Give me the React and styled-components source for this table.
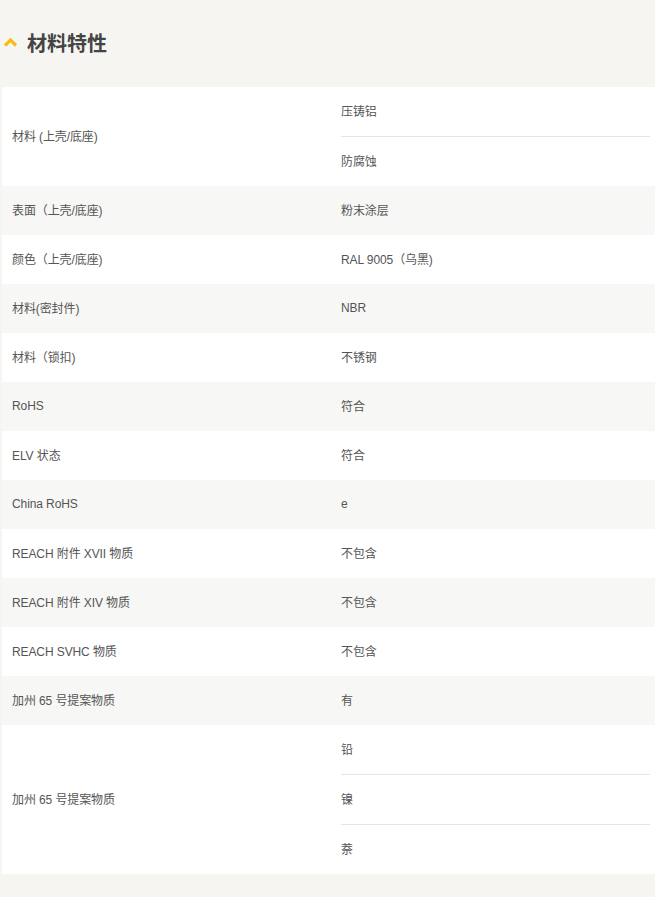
import styled, { createGlobalStyle } from 'styled-components'

const GlobalStyle = createGlobalStyle`
  body {
    margin: 0;
    background: #f6f5f1;
    font-family: "Liberation Sans", "Noto Sans CJK SC", sans-serif;
  }
`

const Section = styled.section`
  padding-bottom: 24px;
`

const Heading = styled.h2`
  display: flex;
  align-items: center;
  gap: 9px;
  height: 87px;
  margin: 0;
  padding: 0 0 3px 3px;
  box-sizing: border-box;
  font-family: "Noto Sans CJK SC", sans-serif;
  font-size: 20px;
  font-weight: 700;
  color: #444;
`

const Chevron = styled.svg`
  width: 15px;
  height: 10px;
  flex-shrink: 0;
`

const Table = styled.div`
  margin-left: 2px;
  display: flex;
  flex-direction: column;
`

const Row = styled.div`
  display: grid;
  grid-template-columns: 339px 1fr;
  background: ${(props) => (props.alt ? '#f7f7f5' : '#fff')};
`

const Label = styled.div`
  display: flex;
  align-items: center;
  padding: 0 0 2px 10px;
  font-size: 12px;
  letter-spacing: -0.1px;
  color: #555;
`

const Values = styled.div`
  display: flex;
  flex-direction: column;
  padding-right: 5px;
`

const Value = styled.div`
  display: flex;
  align-items: center;
  height: 49px;
  box-sizing: border-box;
  padding-bottom: 2px;
  font-size: 12px;
  letter-spacing: -0.1px;
  color: #555;
  & + & {
    height: 50px;
    border-top: 1px solid #e6e6e6;
  }
`

const rows = [
	['材料 (上壳/底座)', ['压铸铝', '防腐蚀']],
	['表面（上壳/底座)', ['粉末涂层']],
	['颜色（上壳/底座)', ['RAL 9005（乌黑)']],
	['材料(密封件)', ['NBR']],
	['材料（锁扣)', ['不锈钢']],
	['RoHS', ['符合']],
	['ELV 状态', ['符合']],
	['China RoHS', ['e']],
	['REACH 附件 XVII 物质', ['不包含']],
	['REACH 附件 XIV 物质', ['不包含']],
	['REACH SVHC 物质', ['不包含']],
	['加州 65 号提案物质', ['有']],
	['加州 65 号提案物质', ['铅', '镍', '萘']],
]

export default function App() {
	return (
		<>
			<GlobalStyle />
			<Section>
				<Heading>
					<Chevron viewBox="0 0 15 10">
						<polyline
							points="2,8.5 7.5,3 13,8.5"
							fill="none"
							stroke="#f6bd16"
							strokeWidth="3.2"
						/>
					</Chevron>
					材料特性
				</Heading>
				<Table>
					{rows.map(([label, values], i) => (
						<Row key={i} alt={i % 2 === 1}>
							<Label>{label}</Label>
							<Values>
								{values.map((v) => (
									<Value key={v}>{v}</Value>
								))}
							</Values>
						</Row>
					))}
				</Table>
			</Section>
		</>
	)
}
